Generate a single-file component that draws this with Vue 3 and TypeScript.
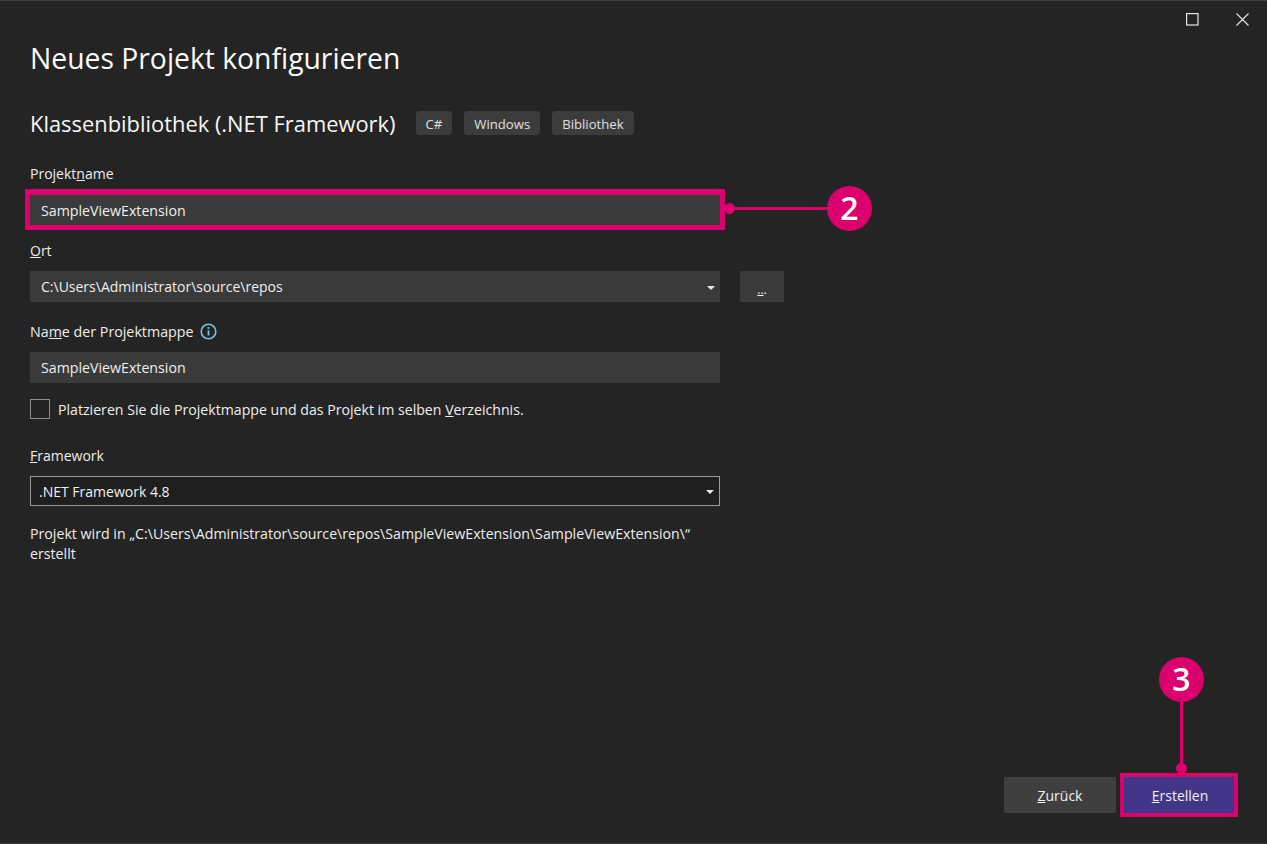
<script setup lang="ts">
const tags: string[] = ['C#', 'Windows', 'Bibliothek']
</script>

<template>
  <div class="dialog">
    <div class="winbar">
      <svg class="winicon" width="13" height="13" viewBox="0 0 13 13"><rect x="0.6" y="0.6" width="11.4" height="11.4" fill="none" stroke="#e6e6e6" stroke-width="1.2" /></svg>
      <svg class="winicon" width="13" height="13" viewBox="0 0 13 13"><path d="M0.5 0.5 12.5 12.5M12.5 0.5 0.5 12.5" fill="none" stroke="#e6e6e6" stroke-width="1.1" /></svg>
    </div>
    <main class="content">
      <h1>Neues Projekt konfigurieren</h1>
      <div class="subhead">
        <h2>Klassenbibliothek (.NET Framework)</h2>
        <div class="tags">
          <span v-for="t in tags" :key="t" class="tag">{{ t }}</span>
        </div>
      </div>

      <label class="lbl first"><span>Projekt<u>n</u>ame</span></label>
      <div class="field first-field">
        <span class="name">SampleViewExtension</span>
        <div class="hl hl-name"><span class="dot dot-right"></span></div>
      </div>

      <label class="lbl ort"><span><u>O</u>rt</span></label>
      <div class="row">
        <div class="field">
          <span>C:\Users\Administrator\source\repos</span>
          <i class="caret"></i>
        </div>
        <div class="browse"><u>..</u>.</div>
      </div>

      <div class="lbl mappe">
        <span>Na<u>m</u>e der Projektmappe</span>
        <svg class="info" width="17" height="17" viewBox="0 0 17 17">
          <circle cx="8.5" cy="8.5" r="7.3" fill="none" stroke="#6cc5e8" stroke-width="1.6" />
          <circle cx="8.5" cy="5" r="1.1" fill="#6cc5e8" />
          <path d="M8.5 7.3v5.2" stroke="#6cc5e8" stroke-width="1.8" fill="none" />
        </svg>
      </div>
      <div class="field"><span class="name">SampleViewExtension</span></div>

      <div class="check">
        <span class="box"></span>
        <span>Platzieren Sie die Projektmappe und das Projekt im selben <u>V</u>erzeichnis.</span>
      </div>

      <label class="lbl fw"><span><u>F</u>ramework</span></label>
      <div class="select">
        <span>.NET Framework 4.8</span>
        <i class="caret"></i>
      </div>

      <div class="note">
        <div>Projekt wird in „C:\Users\Administrator\source\repos\SampleViewExtension\SampleViewExtension\“</div>
        <div>erstellt</div>
      </div>
    </main>
    <footer class="actions">
      <button class="btn"><u>Z</u>urück</button>
      <button class="btn primary">
        <u>E</u>rstellen
        <span class="hl hl-create"><span class="dot dot-top"></span></span>
      </button>
    </footer>

    <div class="callout c2">
      <span class="line"></span>
      <span class="badge">2</span>
    </div>
    <div class="callout c3">
      <span class="badge">3</span>
      <span class="line"></span>
    </div>
  </div>
</template>

<style>
html, body { margin: 0; background: #242424; }
</style>

<style scoped>
.dialog {
  position: relative;
  box-sizing: border-box;
  width: 1267px;
  height: 844px;
  overflow: hidden;
  display: flex;
  flex-direction: column;
  background: #242424;
  border-top: 1px solid #3f3f3f;
  border-bottom: 1px solid #3a3a3a;
  color: #f1f1f1;
  font-family: "Open Sans", "Noto Sans", "Liberation Sans", sans-serif;
  font-size: 14px;
}
.winbar {
  display: flex;
  justify-content: flex-end;
  align-items: center;
  gap: 37px;
  height: 36px;
  padding-right: 18px;
}
.winicon { display: block; }
.content {
  flex: 1;
  padding: 1px 0 0 30px;
  min-height: 0;
}
h1 {
  margin: 0;
  font-size: 28.3px;
  line-height: 40px;
  font-weight: 400;
  color: #fafafa;
}
.subhead {
  display: flex;
  align-items: center;
  margin-top: 33px;
  height: 26px;
}
h2 {
  margin: 0;
  font-size: 21.9px;
  line-height: 26px;
  font-weight: 400;
  color: #f6f6f6;
  white-space: nowrap;
}
.tags { display: flex; gap: 12px; margin-left: 20px; margin-top: -2px; }
.tag {
  height: 24px;
  line-height: 26px;
  padding: 0 10px;
  background: #3c3c3c;
  border-radius: 4px;
  font-size: 13.15px;
  color: #e0e0e0;
}
.lbl {
  display: flex;
  align-items: center;
  height: 20px;
  font-size: 14px;
  color: #eeeeee;
}
.lbl.first { margin-top: 26px; }
.first-field { margin-top: 12px; }
.lbl.ort { margin-top: 14px; }
.ort + .row { margin-top: 11px; }
.lbl.mappe { margin-top: 19px; margin-bottom: 11px; font-size: 14.25px; }
.lbl.fw { margin-top: 26px; margin-bottom: 11px; }
.info { margin-left: 6px; }
.row { display: flex; gap: 20px; }
.field {
  position: relative;
  box-sizing: border-box;
  width: 690px;
  height: 31px;
  display: flex;
  align-items: center;
  padding: 0 11px;
  background: #3a3a3a;
  color: #efefef;
  font-size: 14px;
}
.name { font-size: 14.2px; }
.browse {
  width: 44px;
  height: 31px;
  background: #3a3a3a;
  display: flex;
  justify-content: center;
  align-items: flex-end;
  padding-bottom: 4px;
  box-sizing: border-box;
  line-height: 16px;
  font-size: 12px;
}
.caret {
  position: absolute;
  right: 5px;
  top: 50%;
  margin-top: -1px;
  border-left: 4px solid transparent;
  border-right: 4px solid transparent;
  border-top: 4px solid #e8e8e8;
}
.check {
  display: flex;
  align-items: center;
  gap: 8px;
  margin-top: 16px;
  height: 20px;
  color: #eeeeee;
  font-size: 14.15px;
}
.box {
  box-sizing: border-box;
  width: 20px;
  height: 20px;
  border: 1px solid #8d8d8d;
  background: #222222;
}
.select {
  position: relative;
  box-sizing: border-box;
  width: 690px;
  height: 30px;
  display: flex;
  align-items: center;
  padding: 0 8px;
  background: #1f1f1f;
  border: 1px solid #9b9b9b;
}
.note {
  margin: 18px 0 0;
  font-size: 14.2px;
  line-height: 20px;
  color: #eeeeee;
}
.actions {
  display: flex;
  justify-content: flex-end;
  gap: 8px;
  padding: 0 31px 30px 0;
}
.btn {
  position: relative;
  width: 112px;
  height: 36px;
  padding: 0;
  border: 0;
  background: #3f3f3f;
  color: #f1f1f1;
  font: inherit;
  font-size: 14px;
}
.primary { background: #433587; }
.hl {
  position: absolute;
  box-sizing: border-box;
  border: 4px solid #dc006f;
  pointer-events: none;
}
.hl-name {
  left: -5px;
  right: -5px;
  top: -6px;
  bottom: -4px;
  border-width: 6px 5px 5px;
}
.hl-create { left: -4px; right: -2px; top: -4px; bottom: -4px; }
.dot {
  position: absolute;
  width: 11px;
  height: 11px;
  border-radius: 50%;
  background: #dc006f;
}
.dot-right { right: -15px; top: 50%; margin-top: -7px; }
.dot-top { left: 50%; top: -14px; margin-left: -3px; }
.callout { position: absolute; display: flex; align-items: center; }
.line { display: block; background: #dc006f; }
.badge {
  flex: none;
  width: 45px;
  height: 45px;
  border-radius: 50%;
  background: #dc006f;
  color: #fff;
  text-align: center;
  font-size: 32px;
  line-height: 44px;
  font-weight: 600;
}
.c2 { left: 729px; top: 185px; }
.c2 .line { width: 98px; height: 3px; }
.c3 { left: 1159px; top: 656px; flex-direction: column; }
.c3 .line { width: 3px; height: 68px; }
</style>
